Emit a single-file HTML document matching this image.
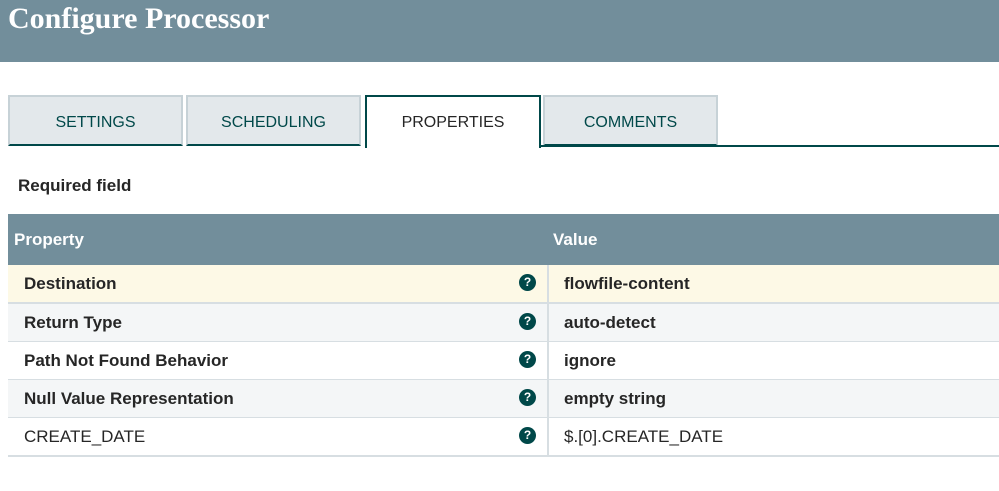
<!DOCTYPE html>
<html><head><style>
body{margin:0;width:999px;height:491px;background:#fff;font-family:"Liberation Sans",sans-serif;overflow:hidden;position:relative}
.hdr{position:absolute;left:0;top:0;width:999px;height:62px;background:#728e9b}
.hdr h1{margin:0;position:absolute;left:8px;top:2px;font-family:"Liberation Serif",serif;font-weight:bold;font-size:30px;color:#fff}
.tab{position:absolute;top:95px;height:51px;width:175px;background:#e3e8eb;border:2px solid #c7d2d7;border-bottom:2px solid #004849;box-sizing:border-box;color:#004849;font-size:16px;text-align:center;line-height:52px}
.tab.a{background:#fff;border:2px solid #004849;border-bottom:none;color:#262626;height:53px;width:176px}
.line{position:absolute;left:540px;top:145px;width:459px;height:2px;background:#004849}
.req{position:absolute;left:18px;top:176px;font-size:17px;font-weight:bold;color:#262626}
.th{position:absolute;left:8px;top:214px;width:991px;height:51px;background:#728e9b;color:#fff;font-weight:bold;font-size:17px}
.th span{position:absolute;top:16px}
.row{position:absolute;left:8px;width:991px;height:37px;border-bottom:2px solid #d7dee2;font-size:17px;color:#262626}
.row .n{position:absolute;left:16px;top:9px}
.row .v{position:absolute;left:556px;top:9px}
.row .d{position:absolute;left:539px;top:0;width:2px;height:37px;background:#d7dee2}
.row .q{position:absolute;left:511px;top:9px;width:17px;height:17px;border-radius:50%;background:#004849;color:#fff;font-size:12px;font-weight:bold;text-align:center;line-height:17px}
b{font-weight:bold}
</style></head><body>
<div class="hdr"><h1>Configure Processor</h1></div>
<div class="tab" style="left:8px">SETTINGS</div>
<div class="tab" style="left:186px">SCHEDULING</div>
<div class="tab a" style="left:365px">PROPERTIES</div>
<div class="tab" style="left:543px">COMMENTS</div>
<div class="line"></div>
<div class="req">Required field</div>
<div class="th"><span style="left:6px">Property</span><span style="left:545px">Value</span></div>
<div class="row" style="top:265px;background:#fdf9e6"><b class="n">Destination</b><span class="q">?</span><span class="d"></span><b class="v">flowfile-content</b></div>
<div class="row" style="top:304px;background:#f4f6f7"><b class="n">Return Type</b><span class="q">?</span><span class="d"></span><b class="v">auto-detect</b></div>
<div class="row" style="top:342px;background:#fff"><b class="n">Path Not Found Behavior</b><span class="q">?</span><span class="d"></span><b class="v">ignore</b></div>
<div class="row" style="top:380px;background:#f4f6f7"><b class="n">Null Value Representation</b><span class="q">?</span><span class="d"></span><b class="v">empty string</b></div>
<div class="row" style="top:418px;background:#fff"><span class="n">CREATE_DATE</span><span class="q">?</span><span class="d"></span><span class="v">$.[0].CREATE_DATE</span></div>
</body></html>
